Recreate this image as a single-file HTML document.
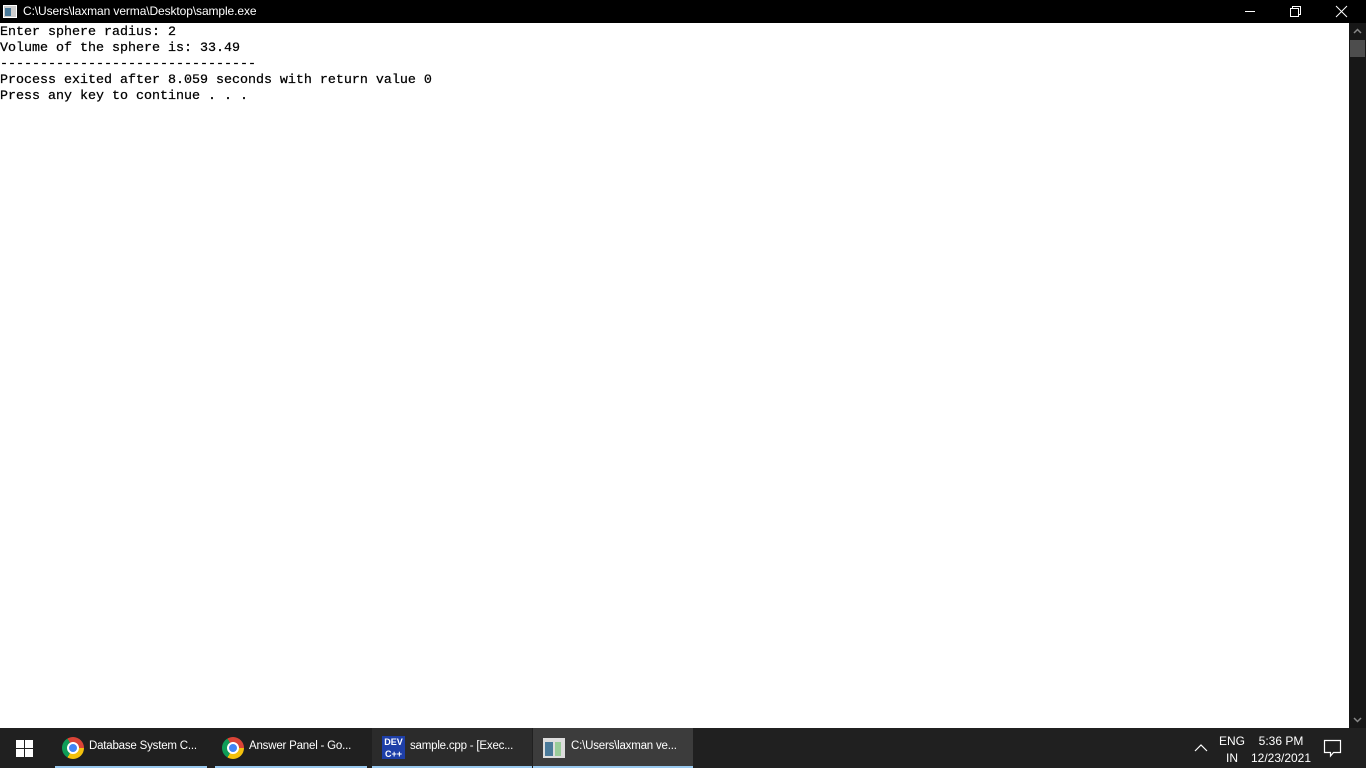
<!DOCTYPE html>
<html><head><meta charset="utf-8"><style>
*{margin:0;padding:0;box-sizing:border-box}
body{width:1366px;height:768px;overflow:hidden;background:#fff;position:relative;font-family:"Liberation Sans",sans-serif}
.title{position:absolute;left:0;top:0;width:1366px;height:23px;background:#000;color:#fff;font-size:12px}
.title .t{position:absolute;left:23px;top:4px;letter-spacing:-0.1px}
.con{position:absolute;left:0;top:25px;font-family:"Liberation Mono",monospace;font-size:13.33px;line-height:16px;white-space:pre;color:#000;-webkit-text-stroke:0.25px #000}
.sb{position:absolute;left:1349px;top:23px;width:17px;height:705px;background:#171717}
.thumb{position:absolute;left:1px;top:17px;width:15px;height:17px;background:#4d4d4d}
.tb{position:absolute;left:0;top:728px;width:1366px;height:40px;background:#202020;color:#fff;font-size:11.5px}
.it{position:absolute;top:0;height:40px;width:152px}
.it .u{position:absolute;left:0;bottom:0;width:100%;height:2px;background:#99c9ef}
.it span{position:absolute;left:34px;top:12px;white-space:nowrap;letter-spacing:-0.2px}
.chrome{position:absolute;left:7px;top:9px;width:22px;height:22px;border-radius:50%;background:conic-gradient(from -30deg,#db4437 0 120deg,#f4c20d 120deg 240deg,#0f9d58 240deg 360deg)}
.chrome:after{content:"";position:absolute;left:5px;top:5px;width:12px;height:12px;border-radius:50%;background:#4285f4;border:2px solid #fff;box-sizing:border-box}
</style></head><body>
<div class="title">
<svg style="position:absolute;left:3px;top:5px" width="14" height="13"><rect x="0.5" y="0.5" width="13" height="12" fill="#ccc" stroke="#fff"/><rect x="2" y="3" width="6" height="8" fill="#4a7a9a"/></svg>
<span class="t">C:\Users\laxman verma\Desktop\sample.exe</span>
<svg style="position:absolute;left:1240px;top:4px" width="120" height="15" stroke="#fff" fill="none" stroke-width="1"><line x1="5" y1="7.5" x2="15" y2="7.5"/><rect x="50.5" y="4.5" width="8" height="8"/><path d="M52.5 4.5V2.5H60.5V10.5H58.5"/><path d="M96 2L107 13M107 2L96 13"/></svg>
</div>
<div class="con">Enter sphere radius: 2
Volume of the sphere is: 33.49
--------------------------------
Process exited after 8.059 seconds with return value 0
Press any key to continue . . .</div>
<div class="sb"><div class="thumb"></div>
<svg style="position:absolute;left:4px;top:5px" width="9" height="6"><path d="M1 5L4.5 1.5L8 5" stroke="#888" fill="none" stroke-width="1.5"/></svg>
<svg style="position:absolute;left:4px;top:694px" width="9" height="6"><path d="M1 1L4.5 4.5L8 1" stroke="#888" fill="none" stroke-width="1.5"/></svg>
</div>
<div class="tb">
<svg style="position:absolute;left:16px;top:12px" width="17" height="17" fill="#fff"><rect x="0" y="0" width="8" height="8"/><rect x="9" y="0" width="8" height="8"/><rect x="0" y="9" width="8" height="8"/><rect x="9" y="9" width="8" height="8"/></svg>
<div class="it" style="left:55px"><div class="chrome"></div><span>Database System C...</span><div class="u"></div></div>
<div class="it" style="left:215px"><div class="chrome"></div><span>Answer Panel - Go...</span><div class="u"></div></div>
<div class="it" style="left:372px;width:160px;background:#2b2b2b"><div style="position:absolute;left:10px;top:8px;width:23px;height:23px;background:#1e3fa8;color:#fff;font-size:9px;font-weight:bold;text-align:center;line-height:12px">DEV<br>C++</div><span style="left:38px">sample.cpp - [Exec...</span><div class="u"></div></div>
<div class="it" style="left:533px;width:160px;background:#3c3c3c"><svg style="position:absolute;left:10px;top:10px" width="22" height="20"><rect width="22" height="20" fill="#ddd"/><rect x="2" y="4" width="8" height="14" fill="#4a7a9a"/><rect x="12" y="4" width="6" height="14" fill="#9c9"/></svg><span style="left:38px">C:\Users\laxman ve...</span><div class="u"></div></div>
<svg style="position:absolute;left:1194px;top:15px" width="14" height="9"><path d="M1 8L7 2L13 8" stroke="#fff" fill="none" stroke-width="1.2"/></svg>
<div style="position:absolute;left:1219px;top:5px;font-size:12px;line-height:17px;text-align:center">ENG<br>IN</div>
<div style="position:absolute;left:1250px;top:5px;width:62px;font-size:12px;line-height:17px;text-align:center">5:36 PM<br>12/23/2021</div>
<svg style="position:absolute;left:1323px;top:11px" width="20" height="19"><path d="M1.5 1.5H17.5V13.5H10.5L7.5 17V13.5H1.5Z" stroke="#fff" fill="none" stroke-width="1.2"/></svg>
</div>
</body></html>
